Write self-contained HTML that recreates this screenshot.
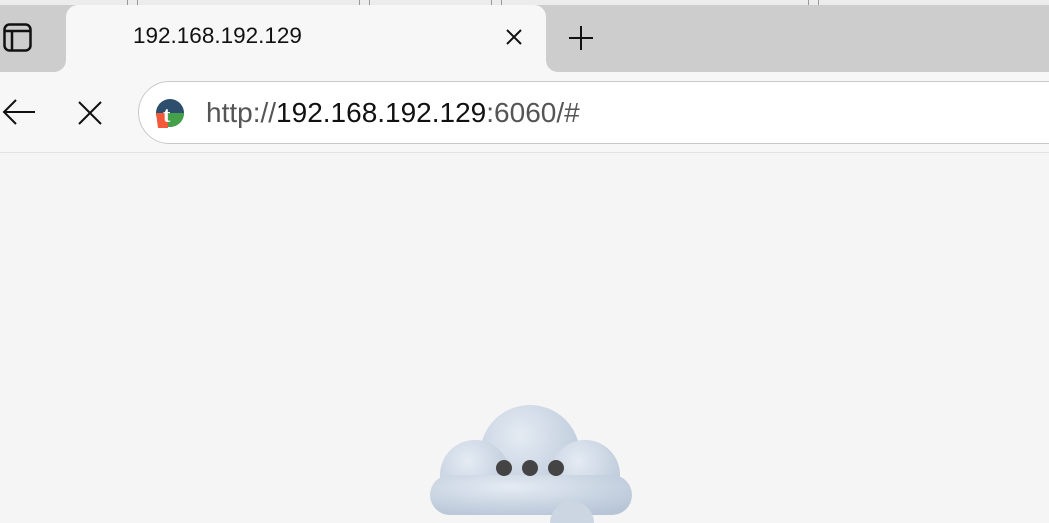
<!DOCTYPE html>
<html><head><style>
body{margin:0;width:1049px;height:523px;overflow:hidden;background:#f5f5f5;font-family:"Liberation Sans",sans-serif;position:relative}
.a{position:absolute}
</style></head><body>
<div class="a" style="left:0;top:0;width:1049px;height:72px;background:#cdcdcd"></div>
<div class="a" style="left:0;top:0;width:1049px;height:5px;background:#ececec"></div>
<div class="a" style="left:127px;top:0;width:1px;height:5px;background:#999"></div>
<div class="a" style="left:137px;top:0;width:1px;height:5px;background:#999"></div>
<div class="a" style="left:359px;top:0;width:1px;height:5px;background:#999"></div>
<div class="a" style="left:369px;top:0;width:1px;height:5px;background:#999"></div>
<div class="a" style="left:491px;top:0;width:1px;height:5px;background:#999"></div>
<div class="a" style="left:501px;top:0;width:1px;height:5px;background:#999"></div>
<div class="a" style="left:808px;top:0;width:1px;height:5px;background:#999"></div>
<div class="a" style="left:818px;top:0;width:1px;height:5px;background:#999"></div>
<div class="a" style="left:54px;top:50px;width:504px;height:22px;background:#f7f7f7"></div>
<div class="a" style="left:42px;top:38px;width:24px;height:34px;background:#cdcdcd;border-bottom-right-radius:12px"></div>
<div class="a" style="left:546px;top:38px;width:24px;height:34px;background:#cdcdcd;border-bottom-left-radius:12px"></div>
<div class="a" style="left:66px;top:5px;width:480px;height:67px;background:#f7f7f7;border-radius:12px 12px 0 0"></div>
<div class="a" style="left:133px;top:23px;font-size:22.5px;color:#111">192.168.192.129</div>
<svg class="a" style="left:505px;top:28px" width="18" height="18"><path d="M2 2L16 16M16 2L2 16" stroke="#111" stroke-width="2"/></svg>
<svg class="a" style="left:567px;top:24px" width="28" height="28"><path d="M14 2V26M2 14H26" stroke="#111" stroke-width="2"/></svg>
<svg class="a" style="left:3px;top:23px" width="30" height="30"><rect x="1.5" y="1.5" width="26" height="26" rx="5" fill="none" stroke="#111" stroke-width="2.5"/><path d="M2 8H28M9 8V28" stroke="#111" stroke-width="2.5"/></svg>
<div class="a" style="left:0;top:72px;width:1049px;height:80px;background:#f7f7f7;border-bottom:1px solid #e2e2e2"></div>
<svg class="a" style="left:1px;top:97px" width="36" height="30"><path d="M34 15H3M15 3L3 15L15 27" stroke="#111" stroke-width="2" fill="none"/></svg>
<svg class="a" style="left:77px;top:100px" width="26" height="26"><path d="M2 2L24 24M24 2L2 24" stroke="#111" stroke-width="2"/></svg>
<div class="a" style="left:138px;top:81px;width:960px;height:61px;background:#fff;border:1.5px solid #c9c9c9;border-radius:32px"></div>
<svg class="a" style="left:154px;top:98px" width="32" height="32"><circle cx="16" cy="15" r="14" fill="#2e4e6e"/><path d="M2 15H30A14 14 0 0 1 16 29A14 14 0 0 1 2 15Z" fill="#45a04a"/><path d="M2 15H14V30H4Z" fill="#f25a3a"/><text x="9" y="24" font-size="22" font-weight="bold" fill="#fff" font-family="Liberation Serif">t</text></svg>
<div class="a" style="left:206px;top:97px;font-size:28px;color:#555">http://<span style="color:#111">192.168.192.129</span>:6060/#</div>
<svg class="a" style="left:420px;top:395px" width="230" height="128">
<defs><radialGradient id="g" cx="0.4" cy="0.3" r="0.8"><stop offset="0" stop-color="#e4ebf3"/><stop offset="1" stop-color="#b6c4d6"/></radialGradient></defs>
<g fill="url(#g)">
<circle cx="110" cy="60" r="50"/>
<circle cx="55" cy="80" r="35"/>
<circle cx="165" cy="80" r="35"/>
<rect x="10" y="80" width="202" height="40" rx="20"/>
</g>
<circle cx="152" cy="128" r="22" fill="#ccd6e3"/>
<circle cx="84" cy="73" r="8" fill="#444"/><circle cx="110" cy="73" r="8" fill="#444"/><circle cx="136" cy="73" r="8" fill="#444"/>
</svg>
</body></html>
